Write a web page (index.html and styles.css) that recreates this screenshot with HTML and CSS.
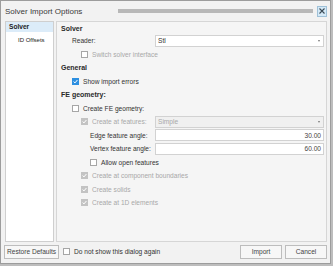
FILE: index.html
```html
<!DOCTYPE html>
<html lang="en">

<head>
    <meta charset="UTF-8">
    <title>Solver Import Options</title>
    <link rel="stylesheet" href="styles.css">
</head>

<body>
    <div class="dialog">
        <div class="titlebar">
            <span class="title">Solver Import Options</span>
            <span class="grip"></span>
            <span class="close">
                <svg width="6" height="6" viewBox="0 0 6 6"><path d="M0.5 0.5L5.5 5.5M5.5 0.5L0.5 5.5" stroke="#3a4a55" stroke-width="1.1"/></svg>
            </span>
        </div>

        <div class="main">
            <div class="nav">
                <div class="nav-item active">Solver</div>
                <div class="nav-item sub">ID Offsets</div>
            </div>

            <div class="panel">
                <div class="row head first">Solver</div>
                <div class="row l1">
                    <span class="label">Reader:</span>
                    <span class="select">Stl<i class="arrow"></i></span>
                </div>
                <div class="row l2 off">
                    <span class="cb"></span>Switch solver interface
                </div>
                <div class="row head">General</div>
                <div class="row l1">
                    <span class="cb on"><svg width="5" height="5" viewBox="0 0 5 5"><path d="M0.6 2.6L2 3.9L4.4 1" stroke="#fff" stroke-width="1" fill="none"/></svg></span>Show import errors
                </div>
                <div class="row head">FE geometry:</div>
                <div class="row l1">
                    <span class="cb"></span>Create FE geometry:
                </div>
                <div class="row l2 off">
                    <span class="cb grey"><svg width="5" height="5" viewBox="0 0 5 5"><path d="M0.6 2.6L2 3.9L4.4 1" stroke="#fff" stroke-width="1" fill="none"/></svg></span>
                    <span class="label">Create at features:</span>
                    <span class="select dis">Simple<i class="arrow"></i></span>
                </div>
                <div class="row l3">
                    <span class="label">Edge feature angle:</span>
                    <span class="field">30.00</span>
                </div>
                <div class="row l3">
                    <span class="label">Vertex feature angle:</span>
                    <span class="field">60.00</span>
                </div>
                <div class="row l3">
                    <span class="cb"></span>Allow open features
                </div>
                <div class="row l2 off">
                    <span class="cb grey"><svg width="5" height="5" viewBox="0 0 5 5"><path d="M0.6 2.6L2 3.9L4.4 1" stroke="#fff" stroke-width="1" fill="none"/></svg></span>Create at component boundaries
                </div>
                <div class="row l2 off">
                    <span class="cb grey"><svg width="5" height="5" viewBox="0 0 5 5"><path d="M0.6 2.6L2 3.9L4.4 1" stroke="#fff" stroke-width="1" fill="none"/></svg></span>Create solids
                </div>
                <div class="row l2 off">
                    <span class="cb grey"><svg width="5" height="5" viewBox="0 0 5 5"><path d="M0.6 2.6L2 3.9L4.4 1" stroke="#fff" stroke-width="1" fill="none"/></svg></span>Create at 1D elements
                </div>
            </div>
        </div>

        <div class="footer">
            <span class="btn restore">Restore Defaults</span>
            <span class="cb"></span>
            <span class="dont">Do not show this dialog again</span>
            <span class="spacer"></span>
            <span class="btn">Import</span>
            <span class="btn">Cancel</span>
        </div>
    </div>
</body>

</html>
```

FILE: styles.css
```css
body {
    margin: 0;
    background-color: #bdbdbd;
    font-family: "Liberation Sans", Arial, sans-serif;
    font-size: 6.6px;
    color: #333;
}

.dialog {
    width: 331px;
    height: 264px;
    box-sizing: border-box;
    border: 1px solid #9c9c9c;
    background-color: #f2f2f2;
    display: flex;
    flex-direction: column;
}

.titlebar {
    height: 20px;
    display: flex;
    align-items: center;
    padding: 0 3px 0 4px;
}

.title {
    font-size: 8px;
    color: #3a3a3a;
}

.grip {
    flex: 1;
    height: 4px;
    margin: 0 4px 0 36px;
    background-image: radial-gradient(circle, #b4b4b4 0.7px, transparent 0.8px);
    background-size: 2px 2px;
}

.close {
    width: 8px;
    height: 9px;
    border: 1px solid #9fc1d8;
    background-color: #d4e9f7;
    display: flex;
    align-items: center;
    justify-content: center;
}

.main {
    height: 221px;
    display: flex;
    gap: 2px;
    padding: 0 3px 0 4px;
}

.nav {
    width: 47px;
    background-color: #fff;
    border: 1px solid #cfcfcf;
}

.nav-item {
    height: 10px;
    line-height: 10px;
    padding-left: 3px;
    margin-bottom: 3px;
    color: #222;
}

.nav-item.active {
    background-color: #dcecf9;
    font-weight: bold;
}

.nav-item.sub {
    padding-left: 12px;
    font-size: 6px;
}

.panel {
    flex: 1;
    background-color: #f5f5f5;
    border: 1px solid #d6d6d6;
    padding-left: 4px;
    padding-right: 2px;
}

.row {
    height: 13.5px;
    display: flex;
    align-items: center;
    white-space: nowrap;
}

.row.first {
    height: 12px;
}

.head {
    font-weight: bold;
    color: #2a2a2a;
    font-size: 7px;
}

.l1 {
    padding-left: 11px;
}

.l2 {
    padding-left: 20px;
}

.l3 {
    padding-left: 29px;
}

.off {
    color: #a8a8a8;
}

.label {
    width: 0;
    flex: 0 0 auto;
}

.l1 .label {
    width: 83px;
}

.l2 .label {
    width: 63px;
}

.l3 .label {
    width: 65px;
}

.cb {
    width: 5px;
    height: 5px;
    border: 1px solid #a6a6a6;
    background-color: #fff;
    margin-right: 4px;
    flex: 0 0 auto;
    display: flex;
    align-items: center;
    justify-content: center;
}

.cb.on {
    background-color: #2d8fe0;
    border-color: #2d8fe0;
}

.cb.grey {
    background-color: #c3c3c3;
    border-color: #c3c3c3;
}

.select,
.field {
    flex: 1;
    height: 10px;
    border: 1px solid #d2d2d2;
    background-color: #fff;
    display: flex;
    align-items: center;
    padding: 0 2px;
    color: #333;
    position: relative;
}

.select.dis {
    background-color: #f0f0f0;
    color: #a8a8a8;
}

.field {
    justify-content: flex-end;
    color: #444;
}

.arrow {
    position: absolute;
    right: 3px;
    top: 4px;
    border-left: 1.5px solid transparent;
    border-right: 1.5px solid transparent;
    border-top: 2px solid #777;
}

.footer {
    flex: 1;
    display: flex;
    align-items: center;
    padding: 0 3px 2px 3px;
}

.btn {
    height: 12px;
    border: 1px solid #bdbdbd;
    background-color: #f7f7f7;
    display: flex;
    align-items: center;
    justify-content: center;
    color: #444;
}

.restore {
    padding: 0 2px;
    margin-right: 4px;
}

.dont {
    color: #333;
}

.spacer {
    flex: 1;
}

.footer .btn + .btn {
    margin-left: 3px;
}

.footer .btn:not(.restore) {
    width: 40px;
}
```
